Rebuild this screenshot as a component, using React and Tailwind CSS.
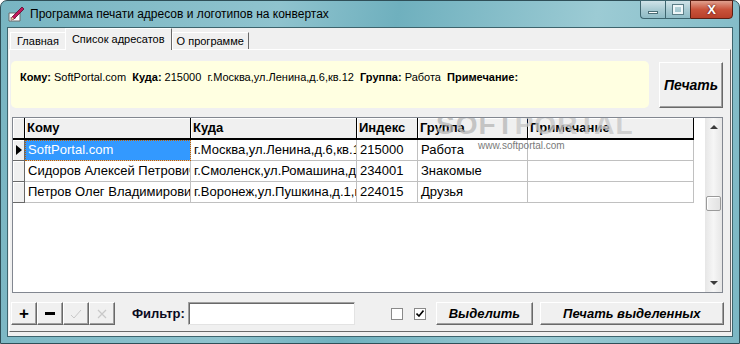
import React from 'react';

const rows = [
    { name: 'SoftPortal.com', addr: 'г.Москва,ул.Ленина,д.6,кв.12', idx: '215000', group: 'Работа', note: '' },
    { name: 'Сидоров Алексей Петрович', addr: 'г.Смоленск,ул.Ромашина,д.3', idx: '234001', group: 'Знакомые', note: '' },
    { name: 'Петров Олег Владимирович', addr: 'г.Воронеж,ул.Пушкина,д.1,кв.5', idx: '224015', group: 'Друзья', note: '' },
];

const cols = [
    { key: 'name', title: 'Кому', w: 'w-[166px]' },
    { key: 'addr', title: 'Куда', w: 'w-[166px]' },
    { key: 'idx', title: 'Индекс', w: 'w-[61px]' },
    { key: 'group', title: 'Группа', w: 'w-[110px]' },
    { key: 'note', title: 'Примечание', w: 'w-[166px]' },
];

const AppIcon = () => (
    <svg width="17" height="16" viewBox="0 0 17 16">
        <path d="M1 7 L12 7 L12 15 L1 15 Z" fill="#fff" stroke="#6b6b6b" strokeWidth="1" />
        <path d="M2 12 L8 12" stroke="#9a9a9a" strokeWidth="1" />
        <path d="M4 11 L14 1 L16 3 L6 13 L3 14 Z" fill="#c2185b" stroke="#5a0a2a" strokeWidth="0.8" />
        <path d="M3 14 L4 11 L6 13 Z" fill="#f2d7a0" />
    </svg>
);

const ClassicButton = ({ children, className = '' }) => (
    <div className={`flex items-center justify-center bg-[#f0f0f0] border border-t-white border-l-white border-r-[#696969] border-b-[#696969] shadow-[inset_-1px_-1px_0_#a0a0a0] ${className}`}>
        {children}
    </div>
);

const App = () => {
    return (
        <div className="w-[740px] h-[344px] bg-white" style={{ fontFamily: '"Liberation Sans", Arial, sans-serif' }}>
            <div className="w-[740px] h-[344px] flex flex-col rounded-t-[7px] border border-[#2f4f58] bg-[linear-gradient(100deg,#78b5c2_0%,#8fc3ce_35%,#6fb0be_50%,#9ccbd4_75%,#7bb7c4_100%)]">
                {/* title bar */}
                <div className="h-[26px] flex items-start shrink-0">
                    <div className="flex items-center h-[26px] pl-[7px]">
                        <AppIcon />
                        <span className="ml-[5px] text-[12px] text-black">Программа печати адресов и логотипов на конвертах</span>
                    </div>
                    <div className="ml-auto mr-[6px] flex h-[19px] -mt-[1px]">
                        <div className="w-[25px] h-full rounded-bl-[4px] border border-[#3e6670] border-r-0 bg-[linear-gradient(#cfe3e8,#a9cbd3_50%,#8fbcc6)] flex items-end justify-center pb-[4px]">
                            <div className="w-[10px] h-[3px] bg-white border border-[#4a6d76]" />
                        </div>
                        <div className="w-[25px] h-full border border-[#3e6670] border-r-0 bg-[linear-gradient(#cfe3e8,#a9cbd3_50%,#8fbcc6)] flex items-center justify-center">
                            <div className="w-[10px] h-[9px] border-[2px] border-[#eef6f8] outline outline-1 outline-[#5c7f88]" />
                        </div>
                        <div className="w-[43px] h-full rounded-br-[4px] border border-[#5b1f14] bg-[linear-gradient(#e0a08e,#c9533b_50%,#b8402a)] flex items-center justify-center">
                            <span className="text-white text-[13px] font-bold leading-none" style={{ textShadow: '0 0 2px #3b0c05' }}>X</span>
                        </div>
                    </div>
                </div>

                {/* client area */}
                <div className="flex-1 mx-[6px] mb-[6px] bg-[#f0f0f0] border border-[#3d646d] flex flex-col">
                    {/* tabs */}
                    <div className="h-[21px] flex items-end pl-[2px] shrink-0 relative z-10">
                        <div className="h-[17px] px-[6px] flex items-center text-[11px] border border-b-0 border-t-white border-l-white border-r-[#a0a0a0]">Главная</div>
                        <div className="h-[22px] -mb-[1px] px-[6px] flex items-center text-[11px] bg-[#f0f0f0] border border-b-0 border-t-white border-l-white border-r-[#696969] -ml-[1px]">Список адресатов</div>
                        <div className="h-[17px] px-[4px] flex items-center text-[11px] border border-b-0 border-t-white border-l-white border-r-[#696969]">О программе</div>
                    </div>
                    <div className="flex-1 mx-[1px] mb-[4px] border border-t-white border-l-white border-r-[#696969] border-b-[#696969] flex flex-col">
                        {/* info + print */}
                        <div className="flex mt-[11px] ml-[1px] mr-[4px]">
                            <div className="w-[638px] h-[47px] rounded-[5px] bg-[#ffffe1] pl-[9px] pt-[8px] text-[11px] whitespace-pre text-black">
                                <b>Кому:</b> SoftPortal.com  <b>Куда:</b> 215000  г.Москва,ул.Ленина,д.6,кв.12  <b>Группа:</b> Работа  <b>Примечание:</b>
                            </div>
                            <ClassicButton className="ml-[10px] mt-[1px] w-[64px] h-[46px]">
                                <span className="text-[14px] font-bold italic">Печать</span>
                            </ClassicButton>
                        </div>

                        {/* grid */}
                        <div className="relative mt-[9px] ml-[2px] w-[711px] h-[176px] border border-[#828790] bg-white flex overflow-hidden">
                            <div className="flex flex-col">
                                <div className="flex h-[22px] bg-[#f0f0f0]">
                                    <div className="w-[12px] h-full border-r border-b-2 border-black shadow-[inset_1px_1px_0_#fff]" />
                                    {cols.map((c) => (
                                        <div key={c.key} className={`${c.w} h-full border-r border-b-2 border-black shadow-[inset_1px_1px_0_#fff] pl-[2px] flex items-center text-[13px] font-bold`}>
                                            {c.title}
                                        </div>
                                    ))}
                                </div>
                                {rows.map((r, i) => (
                                    <div key={i} className="flex h-[21px]">
                                        <div className="w-[12px] h-full bg-[#f0f0f0] border-r border-b border-[#696969] shadow-[inset_1px_1px_0_#fff] flex items-center justify-center">
                                            {i === 0 && <div className="w-0 h-0 border-y-[5px] border-y-transparent border-l-[6px] border-l-black ml-[1px]" />}
                                        </div>
                                        {cols.map((c, j) => (
                                            <div key={c.key} className={`${c.w} h-full border-r border-b border-[#c0c0c0] overflow-hidden whitespace-nowrap pl-[3px] flex items-center text-[13px] ${i === 0 && j === 0 ? 'bg-[#3399ff] text-white outline outline-1 outline-dotted outline-[#c06000] -outline-offset-1' : 'text-black'}`}>
                                                {r[c.key]}
                                            </div>
                                        ))}
                                    </div>
                                ))}
                            </div>
                            {/* scrollbar */}
                            <div className="ml-auto w-[17px] h-full bg-[linear-gradient(90deg,#e6e6e6,#f6f6f6_50%,#e6e6e6)] flex flex-col items-center">
                                <div className="mt-[7px] w-0 h-0 border-x-[4px] border-x-transparent border-b-[4px] border-b-[#3c3c3c]" />
                                <div className="mt-[67px] w-[15px] h-[15px] rounded-[2px] border border-[#9a9a9a] bg-[linear-gradient(90deg,#f2f2f2,#e2e2e2)] shadow-[inset_1px_1px_0_#fff]" />
                                <div className="mt-auto mb-[7px] w-0 h-0 border-x-[4px] border-x-transparent border-t-[4px] border-t-[#3c3c3c]" />
                            </div>
                            {/* watermark */}
                            <div className="absolute left-[423px] -top-[7px] pointer-events-none flex flex-col items-start">
                                <span className="text-[28px] font-bold tracking-[1px] leading-none">
                                    <span className="text-[#b8b8b8]/80">SOFT</span><span className="text-[#c8c8c8]/80">PORTAL</span>
                                </span>
                                <span className="ml-[42px] mt-[2px] text-[10px] text-[#7a7a7a] leading-none">www.softportal.com</span>
                            </div>
                        </div>

                        {/* toolbar */}
                        <div className="flex items-center mt-[9px] ml-[1px]">
                            <ClassicButton className="w-[26px] h-[23px]"><span className="text-[17px] font-bold leading-none">+</span></ClassicButton>
                            <ClassicButton className="w-[26px] h-[23px]"><div className="w-[10px] h-[3px] bg-black" /></ClassicButton>
                            <ClassicButton className="w-[26px] h-[23px]">
                                <svg width="12" height="10" viewBox="0 0 12 10"><path d="M1 6 L4 9 L11 1" stroke="#c8c8c8" strokeWidth="1" fill="none" /></svg>
                            </ClassicButton>
                            <ClassicButton className="w-[26px] h-[23px]">
                                <svg width="10" height="10" viewBox="0 0 10 10"><path d="M1 1 L9 9 M9 1 L1 9" stroke="#c8c8c8" strokeWidth="1.2" fill="none" /></svg>
                            </ClassicButton>
                            <span className="ml-[17px] text-[13px] font-bold text-[#0a0a1e]">Фильтр:</span>
                            <div className="ml-[3px] w-[167px] h-[23px] bg-white border border-t-[#a0a0a0] border-l-[#a0a0a0] border-r-[#e3e3e3] border-b-[#e3e3e3] shadow-[inset_1px_1px_0_#696969]" />
                            <div className="ml-[36px] w-[12px] h-[12px] bg-white border border-[#8a8a8a]" />
                            <div className="ml-[11px] w-[12px] h-[12px] bg-white border border-[#8a8a8a] flex items-center justify-center">
                                <svg width="8" height="7" viewBox="0 0 8 7"><path d="M0.5 3.5 L3 6 L7.5 0.5" stroke="#000" strokeWidth="1.6" fill="none" /></svg>
                            </div>
                            <ClassicButton className="ml-[10px] w-[97px] h-[23px]"><span className="text-[13px] font-bold italic">Выделить</span></ClassicButton>
                            <ClassicButton className="ml-[7px] w-[184px] h-[23px]"><span className="text-[13px] font-bold italic">Печать выделенных</span></ClassicButton>
                        </div>
                    </div>
                </div>
            </div>
        </div>
    );
};

export default App;
